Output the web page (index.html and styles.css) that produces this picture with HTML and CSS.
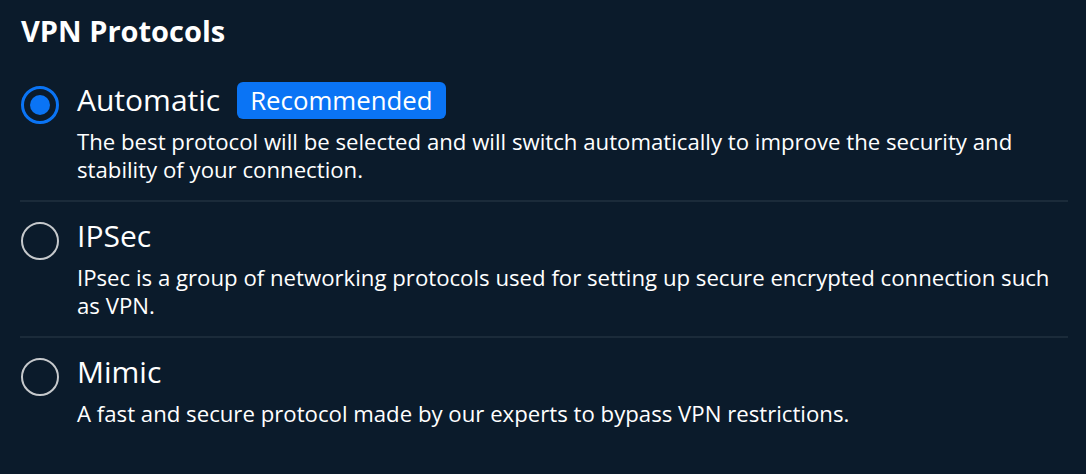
FILE: index.html
```html
<!DOCTYPE html>
<html lang="en">
<head>
<meta charset="utf-8">
<title>VPN Protocols</title>
<link rel="stylesheet" href="styles.css">
</head>
<body>
<main class="page">
  <h1 class="title">VPN Protocols</h1>
  <div class="options">
    <div class="option">
      <span class="radio radio-checked"><span class="dot"></span></span>
      <div class="body">
        <div class="label-row">
          <span class="label">Automatic</span>
          <span class="badge">Recommended</span>
        </div>
        <p class="desc">The best protocol will be selected and will switch automatically to improve the security and stability of your connection.</p>
      </div>
    </div>
    <div class="option">
      <span class="radio"></span>
      <div class="body">
        <div class="label-row">
          <span class="label">IPSec</span>
        </div>
        <p class="desc">IPsec is a group of networking protocols used for setting up secure encrypted connection such as VPN.</p>
      </div>
    </div>
    <div class="option">
      <span class="radio"></span>
      <div class="body">
        <div class="label-row">
          <span class="label">Mimic</span>
        </div>
        <p class="desc">A fast and secure protocol made by our experts to bypass VPN restrictions.</p>
      </div>
    </div>
  </div>
</main>
</body>
</html>
```
FILE: styles.css
```css
html, body {
  margin: 0;
  padding: 0;
  background: #0b1b2b;
}
body {
  font-family: "Open Sans", "Liberation Sans", sans-serif;
  color: #ffffff;
  height: 474px;
  overflow: hidden;
}
.page {
  padding: 0 18px 0 20px;
}
.title {
  margin: 13px 0 17px 1px;
  font-size: 29px;
  line-height: 36px;
  font-weight: 700;
}
.option {
  display: grid;
  grid-template-columns: 38px 1fr;
  column-gap: 18px;
  padding: 16px 0 16px 1px;
  border-bottom: 2px solid #1b2b3a;
}
.option:last-child {
  border-bottom: none;
}
.radio {
  box-sizing: border-box;
  width: 38px;
  height: 38px;
  margin-top: 4px;
  border: 2px solid #c6c9cc;
  border-radius: 50%;
  display: flex;
  align-items: center;
  justify-content: center;
}
.radio-checked {
  border: 3px solid #0a74f5;
}
.dot {
  width: 20px;
  height: 20px;
  border-radius: 50%;
  background: #0a74f5;
}
.label-row {
  display: flex;
  align-items: center;
  gap: 17px;
  height: 36px;
}
.label {
  font-size: 30px;
  line-height: 36px;
}
.badge {
  background: #0a74f5;
  border-radius: 6px;
  height: 37px;
  padding: 0 13px;
  display: flex;
  align-items: center;
  font-size: 25.8px;
}
.desc {
  margin: 10px 0 0;
  font-size: 22.2px;
  line-height: 28px;
}
```
